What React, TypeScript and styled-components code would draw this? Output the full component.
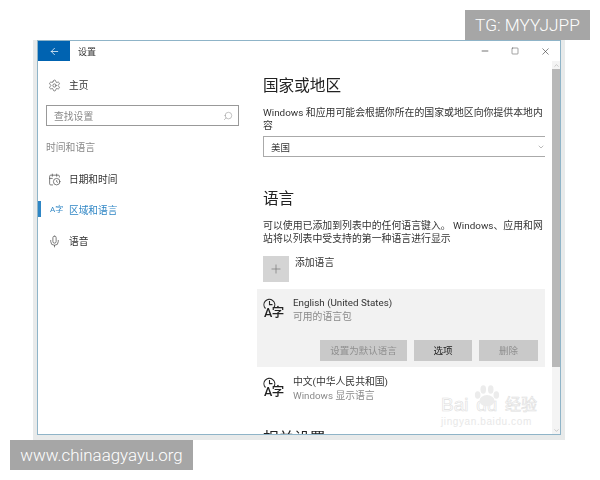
import styled, { createGlobalStyle } from "styled-components";
import { ArrowLeft, CalendarClock, ChevronDown, ChevronUp, Mic, Minus, Plus, Search, Settings, Square, X } from "lucide-react";

const GlobalStyle = createGlobalStyle`
  html, body {
    margin: 0;
    padding: 0;
    background: #fff;
  }
  body {
    width: 600px;
    height: 480px;
    overflow: hidden;
    font-family: Roboto, "Noto Sans CJK SC", sans-serif;
  }
`;

const Page = styled.div`
  position: relative;
  width: 600px;
  height: 480px;
  padding: 40px 35px 40px 33px;
  box-sizing: border-box;
`;

const Badge = styled.div<{ $top: number; $left: number; $width: number; $size: number }>`
  position: absolute;
  top: ${(p) => p.$top}px;
  left: ${(p) => p.$left}px;
  width: ${(p) => p.$width}px;
  height: 30px;
  background: #a6a6a6;
  color: #fff;
  font-family: Roboto, sans-serif;
  font-weight: 300;
  font-size: ${(p) => p.$size}px;
  line-height: 30px;
  text-align: center;
  z-index: 5;
`;

const Backdrop = styled.div`
  height: 400px;
  background: #e8eaea;
  padding: 0 4px 5px 4px;
  box-sizing: border-box;
`;

const Window = styled.div`
  height: 395px;
  background: #fff;
  border: 1px solid #8fb4c8;
  box-sizing: border-box;
  display: flex;
  flex-direction: column;
  overflow: hidden;
  filter: blur(0.35px);
`;

const TitleBar = styled.div`
  height: 20px;
  flex: none;
  display: flex;
  align-items: center;
`;

const BackButton = styled.div`
  width: 32px;
  height: 20px;
  background: #0063b1;
  color: #fff;
  display: flex;
  align-items: center;
  justify-content: center;
`;

const TitleText = styled.div`
  margin-left: 8px;
  font-size: 9px;
  color: #333;
  flex: 1;
`;

const WindowControls = styled.div`
  display: flex;
  align-items: center;
  color: #444;
`;

const WindowControl = styled.div`
  width: 30px;
  display: flex;
  justify-content: center;
`;

const Body = styled.div`
  flex: 1;
  min-height: 0;
  display: flex;
`;

const Sidebar = styled.nav`
  width: 219px;
  flex: none;
  padding-top: 13px;
  box-sizing: border-box;
`;

const NavItem = styled.div<{ $active?: boolean; $gap?: number }>`
  position: relative;
  height: 22px;
  margin-top: ${(p) => p.$gap ?? 0}px;
  padding-left: 9px;
  display: flex;
  align-items: center;
  font-size: 9.7px;
  color: ${(p) => (p.$active ? "#2f86c5" : "#333")};
`;

const NavIcon = styled.span`
  width: 22px;
  flex: none;
  padding-left: 1px;
  box-sizing: border-box;
  display: flex;
  align-items: center;
  color: #555;
`;

const RegionGlyph = styled.span`
  font-size: 8px;
  padding-left: 2px;
  color: #2f86c5;
  line-height: 1;
`;

const ActiveBar = styled.span`
  position: absolute;
  left: 0;
  top: 2px;
  width: 3px;
  height: 16px;
  background: #2f86c5;
`;

const SearchBox = styled.div`
  width: 193px;
  height: 21px;
  margin: 9px 0 0 8px;
  border: 1px solid #999;
  box-sizing: border-box;
  padding: 0 5px 0 7px;
  display: flex;
  align-items: center;
  justify-content: space-between;
  font-size: 9.8px;
  color: #888;
`;

const SidebarHeading = styled.div`
  margin: 15px 0 0 8px;
  height: 14px;
  line-height: 14px;
  font-size: 9.8px;
  color: #8a8a8a;
`;

const Main = styled.main`
  flex: 1;
  min-width: 0;
  padding: 13px 7px 0 6px;
  overflow: hidden;
  box-sizing: border-box;
`;

const Heading = styled.h2<{ $top?: number }>`
  margin: ${(p) => p.$top ?? 0}px 0 0;
  font-size: 15.6px;
  font-weight: 400;
  line-height: 24px;
  color: #222;
`;

const Paragraph = styled.p<{ $top?: number }>`
  width: 283px;
  margin: ${(p) => p.$top ?? 0}px 0 0;
  font-size: 9.9px;
  line-height: 12.5px;
  color: #333;
`;

const SelectBox = styled.div`
  width: 282px;
  height: 21px;
  margin-top: 4px;
  border: 1px solid #aaa;
  border-right: 0;
  box-sizing: border-box;
  padding: 0 0 0 7px;
  display: flex;
  align-items: center;
  justify-content: space-between;
  font-size: 9.5px;
  color: #333;
`;

const AddRow = styled.div`
  display: flex;
  margin-top: 11px;
  font-size: 9.8px;
  color: #333;
`;

const AddButton = styled.div`
  width: 26px;
  height: 26px;
  background: #d4d4d4;
  color: #777;
  display: flex;
  align-items: center;
  justify-content: center;
`;

const AddLabel = styled.span`
  margin-left: 6px;
  line-height: 14px;
`;

const LanguagePanel = styled.div`
  width: 288px;
  height: 78px;
  margin: 7px 0 0 -6px;
  padding: 7px 7px 0 6px;
  box-sizing: border-box;
  background: #f2f2f2;
`;

const LanguageRow = styled.div<{ $plain?: boolean }>`
  display: flex;
  gap: 8px;
  margin-top: ${(p) => (p.$plain ? "8px" : "0")};
`;

const LanguageIcon = styled.div`
  position: relative;
  width: 22px;
  height: 26px;
  flex: none;
  color: #222;
`;

const LanguageGlyph = styled.span`
  position: absolute;
  left: 1px;
  top: 10px;
  font-size: 12.5px;
  line-height: 14px;
  font-weight: 500;
  letter-spacing: -0.5px;
  white-space: nowrap;
`;

const LanguageText = styled.div`
  font-size: 9.8px;
  line-height: 13.5px;
  color: #333;
`;

const LanguageSub = styled.div`
  color: #8a8a8a;
`;

const ButtonRow = styled.div`
  display: flex;
  justify-content: flex-end;
  gap: 7px;
  margin-top: 17px;
`;

const ActionButton = styled.div<{ $width: number; $disabled?: boolean }>`
  width: ${(p) => p.$width}px;
  height: 21px;
  background: #c9c9c9;
  color: ${(p) => (p.$disabled ? "#8f8f8f" : "#222")};
  font-size: 9.5px;
  line-height: 21px;
  text-align: center;
`;

const Scrollbar = styled.div`
  width: 8px;
  flex: none;
  display: flex;
  flex-direction: column;
  background: #f4f4f4;
  color: #aaa;
`;

const ScrollThumb = styled.div`
  height: 298px;
  background: #b8b8b8;
`;

const ScrollTrack = styled.div`
  flex: 1;
`;

const ScrollArrow = styled.div`
  height: 8px;
  display: flex;
  align-items: center;
  justify-content: center;
`;

const Watermark = styled.div`
  position: absolute;
  left: 441px;
  top: 394px;
  width: 96px;
  color: transparent;
  -webkit-text-stroke: 0.6px #dedede;
  font-family: "Liberation Sans", "Noto Sans CJK SC", sans-serif;
  pointer-events: none;
`;

const WatermarkLogo = styled.div`
  display: flex;
  justify-content: space-between;
  font-size: 19px;
  line-height: 22px;
  white-space: nowrap;
`;

const WatermarkCjk = styled.span`
  font-size: 16px;
`;

const WatermarkPaw = styled.svg`
  position: absolute;
  left: 32px;
  top: -11px;
`;

const WatermarkUrl = styled.div`
  -webkit-text-stroke: 0;
  color: #e8e8e8;
  font-size: 10px;
  line-height: 10px;
  margin-top: 1px;
  letter-spacing: 0.6px;
  white-space: nowrap;
`;

function ClockLanguageIcon() {
  return (
    <LanguageIcon>
      <svg width="13" height="13" viewBox="0 0 13 13" fill="none" stroke="currentColor" strokeWidth="1.1">
        <path d="M2.5 10.5A5.4 5.4 0 1 1 11 9.5" />
        <path d="M6.5 3V6.6H9.5" />
      </svg>
      <LanguageGlyph>A字</LanguageGlyph>
    </LanguageIcon>
  );
}

export default function App() {
  return (
    <>
      <GlobalStyle />
      <Page>
        <Badge $top={10} $left={465} $width={125} $size={17.3}>TG: MYYJJPP</Badge>
        <Backdrop>
          <Window>
            <TitleBar>
              <BackButton><ArrowLeft size={11} strokeWidth={1.6} /></BackButton>
              <TitleText>设置</TitleText>
              <WindowControls>
                <WindowControl><Minus size={10} strokeWidth={1.8} /></WindowControl>
                <WindowControl><Square size={8} strokeWidth={1.5} /></WindowControl>
                <WindowControl><X size={11} strokeWidth={1.4} /></WindowControl>
              </WindowControls>
            </TitleBar>
            <Body>
              <Sidebar>
                <NavItem>
                  <NavIcon><Settings size={13} strokeWidth={1.3} /></NavIcon>
                  主页
                </NavItem>
                <SearchBox>
                  查找设置
                  <Search size={10} strokeWidth={1.2} style={{ transform: "scaleX(-1)" }} />
                </SearchBox>
                <SidebarHeading>时间和语言</SidebarHeading>
                <NavItem $gap={13}>
                  <NavIcon><CalendarClock size={13} strokeWidth={1.4} /></NavIcon>
                  日期和时间
                </NavItem>
                <NavItem $gap={9} $active>
                  <ActiveBar />
                  <NavIcon><RegionGlyph>A字</RegionGlyph></NavIcon>
                  区域和语言
                </NavItem>
                <NavItem $gap={9}>
                  <NavIcon><Mic size={13} strokeWidth={1.4} /></NavIcon>
                  语音
                </NavItem>
              </Sidebar>
              <Main>
                <Heading>国家或地区</Heading>
                <Paragraph $top={9}>Windows 和应用可能会根据你所在的国家或地区向你提供本地内容</Paragraph>
                <SelectBox>
                  美国
                  <ChevronDown size={8} color="#999" />
                </SelectBox>
                <Heading $top={30}>语言</Heading>
                <Paragraph $top={9}>可以使用已添加到列表中的任何语言键入。 Windows、应用和网站将以列表中受支持的第一种语言进行显示</Paragraph>
                <AddRow>
                  <AddButton><Plus size={14} strokeWidth={1.2} /></AddButton>
                  <AddLabel>添加语言</AddLabel>
                </AddRow>
                <LanguagePanel>
                  <LanguageRow>
                    <ClockLanguageIcon />
                    <LanguageText>
                      English (United States)
                      <LanguageSub>可用的语言包</LanguageSub>
                    </LanguageText>
                  </LanguageRow>
                  <ButtonRow>
                    <ActionButton $width={87} $disabled>设置为默认语言</ActionButton>
                    <ActionButton $width={58}>选项</ActionButton>
                    <ActionButton $width={59} $disabled>删除</ActionButton>
                  </ButtonRow>
                </LanguagePanel>
                <LanguageRow $plain>
                  <ClockLanguageIcon />
                  <LanguageText>
                    中文(中华人民共和国)
                    <LanguageSub>Windows 显示语言</LanguageSub>
                  </LanguageText>
                </LanguageRow>
                <Heading $top={25}>相关设置</Heading>
              </Main>
              <Scrollbar>
                <ScrollArrow><ChevronUp size={7} /></ScrollArrow>
                <ScrollThumb />
                <ScrollTrack />
                <ScrollArrow><ChevronDown size={7} /></ScrollArrow>
              </Scrollbar>
            </Body>
          </Window>
        </Backdrop>
        <Watermark>
          <WatermarkPaw width="28" height="26" viewBox="0 0 30 24" fill="#ececec">
            <ellipse cx="15" cy="17" rx="8" ry="6" />
            <ellipse cx="5" cy="11" rx="3" ry="4" />
            <ellipse cx="11" cy="5" rx="3" ry="4.5" />
            <ellipse cx="19" cy="5" rx="3" ry="4.5" />
            <ellipse cx="25" cy="11" rx="3" ry="4" />
          </WatermarkPaw>
          <WatermarkLogo>
            <span>Bai</span>
            <span>du</span>
            <WatermarkCjk>经验</WatermarkCjk>
          </WatermarkLogo>
          <WatermarkUrl>jingyan.baidu.com</WatermarkUrl>
        </Watermark>
        <Badge $top={440} $left={10} $width={183} $size={16.9}>www.chinaagyayu.org</Badge>
      </Page>
    </>
  );
}
